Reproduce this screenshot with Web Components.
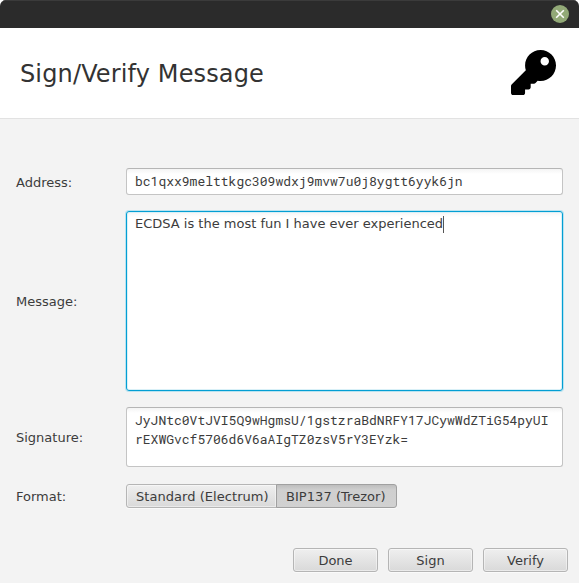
<!DOCTYPE html>
<html lang="en">
<head>
<meta charset="utf-8">
<title>Sign/Verify Message</title>
<style>
  body {
    margin: 0;
    background: #fff;
    font: 13px/16px "DejaVu Sans", sans-serif;
    color: #3c3c3c;
  }
</style>
</head>
<body>
<message-dialog>
  <title-bar slot="top"></title-bar>
  <dialog-header slot="top">Sign/Verify Message</dialog-header>

  <form-row label="Address:">
    <text-box mono style="--height: 27px">bc1qxx9melttkgc309wdxj9mvw7u0j8ygtt6yyk6jn</text-box>
  </form-row>
  <form-row label="Message:">
    <text-box focused style="--height: 180px">ECDSA is the most fun I have ever experienced</text-box>
  </form-row>
  <form-row label="Signature:">
    <text-box mono style="--height: 60px">JyJNtc0VtJVI5Q9wHgmsU/1gstzraBdNRFY17JCywWdZTiG54pyUIrEXWGvcf5706d6V6aAIgTZ0zsV5rY3EYzk=</text-box>
  </form-row>
  <form-row label="Format:">
    <toggle-group>
      <push-button segment="first">Standard (Electrum)</push-button>
      <push-button segment="last" selected>BIP137 (Trezor)</push-button>
    </toggle-group>
  </form-row>

  <push-button slot="actions">Done</push-button>
  <push-button slot="actions">Sign</push-button>
  <push-button slot="actions">Verify</push-button>
</message-dialog>

<script>
// small helper, every element gets its shadow root from a template
const define = (name, html, setup) => {
  const template = document.createElement("template");
  template.innerHTML = html;

  window.customElements.define(name, class extends HTMLElement {
    constructor() {
      super();
      this.attachShadow({ mode: "open" });
      this.shadowRoot.appendChild(template.content.cloneNode(true));
      if (setup) setup(this);
    }
  });
};

// the window itself
define("message-dialog", `
  <style>
    :host {
      display: flex;
      flex-direction: column;
      box-sizing: border-box;
      width: 579px;
      height: 583px;
      background: #f3f3f3;
      border-radius: 6px 6px 0 0;
      overflow: hidden;
    }
    .form {
      display: flex;
      flex-direction: column;
      gap: 16px;
      padding: 49px 16px 0;
    }
    .actions {
      display: flex;
      justify-content: flex-end;
      gap: 10px;
      margin-top: auto;
      padding: 0 11px 11px;
    }
    ::slotted(push-button) {
      width: 85px;
    }
  </style>
  <slot name="top"></slot>
  <div class="form"><slot></slot></div>
  <div class="actions"><slot name="actions"></slot></div>
`);

define("title-bar", `
  <style>
    :host {
      display: flex;
      align-items: center;
      justify-content: flex-end;
      box-sizing: border-box;
      height: 28px;
      padding-right: 10px;
      background: #2b2b2b;
      box-shadow: inset 0 1px #3b3b3b;
    }
    svg { display: block; }
  </style>
  <svg width="18" height="18" viewBox="0 0 18 18">
    <circle cx="9" cy="9" r="9" fill="#92a977"/>
    <path d="M5.2 5.2l7.6 7.6M12.8 5.2l-7.6 7.6" stroke="#fff" stroke-width="1.6"/>
  </svg>
`);

define("dialog-header", `
  <style>
    :host {
      display: flex;
      align-items: flex-start;
      justify-content: space-between;
      box-sizing: border-box;
      height: 91px;
      padding: 22px 23px 0 20px;
      background: #fff;
      border-bottom: 1px solid #e2e2e2;
      font-size: 24px;
      line-height: 28px;
      letter-spacing: 0.14px;
      color: #333;
    }
    span { margin-top: 10px; }
    svg { display: block; }
  </style>
  <span><slot></slot></span>
  <svg width="45" height="45" viewBox="0 0 512 512">
    <path d="M512 176.001C512 273.203 433.202 352 336 352c-11.22 0-22.19-1.062-32.827-3.069l-24.012 27.014A23.999 23.999 0 0 1 261.223 384H224v40c0 13.255-10.745 24-24 24h-40v40c0 13.255-10.745 24-24 24H24c-13.255 0-24-10.745-24-24v-78.059c0-6.365 2.529-12.47 7.029-16.971l161.802-161.802C163.108 213.814 160 195.271 160 176 160 78.798 238.797.001 335.999 0 433.488-.001 512 78.511 512 176.001zM336 128c0 26.51 21.49 48 48 48s48-21.49 48-48-21.49-48-48-48-48 21.49-48 48z"/>
  </svg>
`);

define("form-row", `
  <style>
    :host {
      display: grid;
      grid-template-columns: 110px 1fr;
      align-items: center;
    }
    .label { padding-top: 2px; }
  </style>
  <span class="label"></span>
  <slot></slot>
`, (el) => {
  el.shadowRoot.querySelector(".label").textContent = el.getAttribute("label");
});

define("text-box", `
  <style>
    :host {
      display: block;
      box-sizing: border-box;
      height: var(--height);
      padding: 4px 8px;
      background: linear-gradient(#f4f4f4, #fff 5px);
      border: 1px solid #c4c4c4;
      border-top-color: #b5b5b5;
      border-radius: 3px;
      word-break: break-all;
    }
    :host([mono]) {
      padding-top: 3px;
      font: 13px/19px "Roboto Mono", "DejaVu Sans Mono", monospace;
    }
    :host([focused]) {
      border-color: #039ed3;
      box-shadow: 0 0 0 1px #b9e3f0, inset 0 0 0 1px #d9f0f7;
    }
    .caret {
      display: none;
      width: 1px;
      height: 17px;
      margin-right: -1px;
      vertical-align: top;
      background: #555;
    }
    :host([focused]) .caret { display: inline-block; }
  </style>
  <slot></slot><span class="caret"></span>
`);

define("toggle-group", `
  <style>
    :host {
      display: flex;
      padding: 1px 0;
    }
  </style>
  <slot></slot>
`);

define("push-button", `
  <style>
    :host {
      display: flex;
      align-items: center;
      justify-content: center;
      box-sizing: border-box;
      height: 24px;
      padding: 2px 8px 0;
      border: 1px solid #b5b5b5;
      border-radius: 3px;
      background: linear-gradient(#efefef, #d9d9d9);
      box-shadow: inset 0 0 0 1px rgba(255, 255, 255, 0.45), 0 1px #fafafa;
      white-space: nowrap;
    }
    :host([segment]) {
      justify-content: flex-start;
      letter-spacing: 0.05px;
    }
    :host([segment="first"]) {
      width: 151px;
      padding-left: 9px;
      border-radius: 3px 0 0 3px;
    }
    :host([segment="last"]) {
      width: 121px;
      padding-left: 9px;
      margin-left: -1px;
      border-radius: 0 3px 3px 0;
    }
    :host([selected]) {
      border-color: #a0a0a0;
      background: linear-gradient(#bdbdbd, #cfcfcf 5px, #d1d1d1);
      box-shadow: 0 1px #fafafa;
    }
  </style>
  <slot></slot>
`);
</script>
</body>
</html>
